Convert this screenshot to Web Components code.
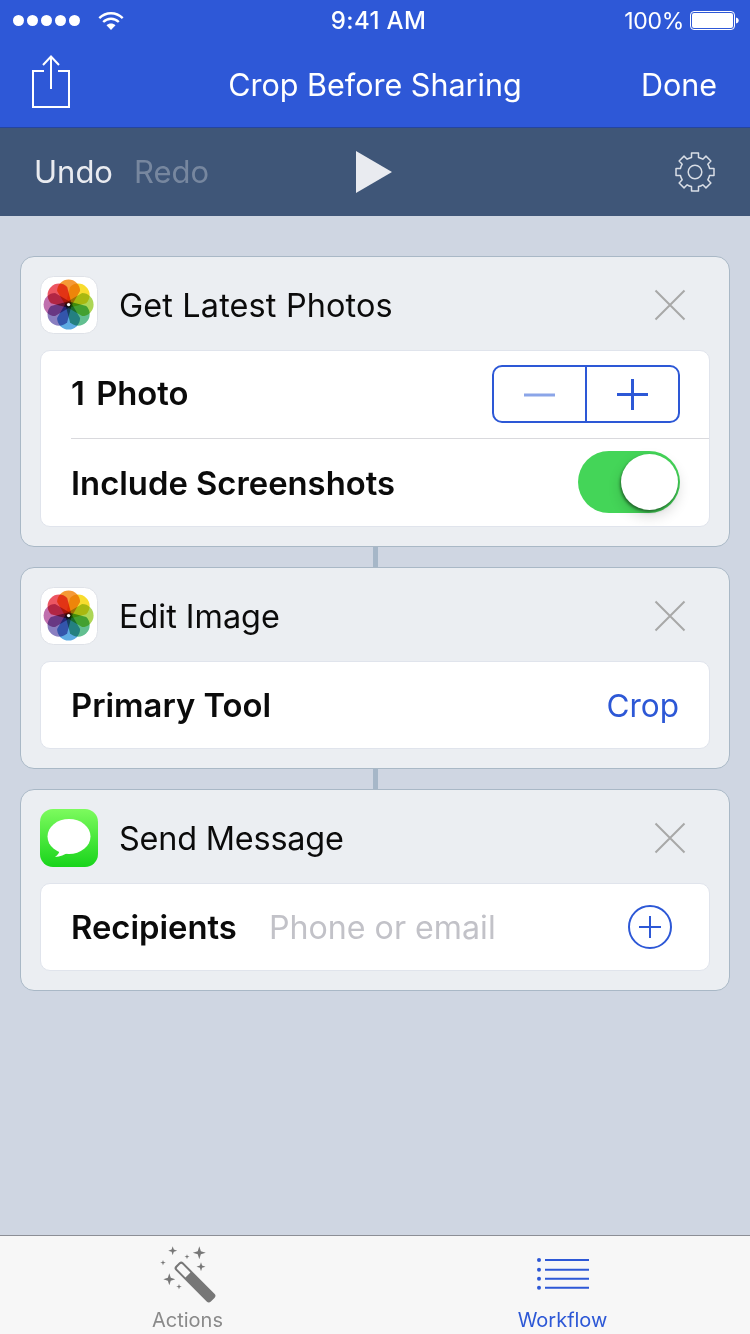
<!DOCTYPE html>
<html lang="en"><head><meta charset="utf-8"><title>Crop Before Sharing</title>
<style>
html,body{margin:0;padding:0;background:#cfd6e2}
body{width:750px;height:1334px;overflow:hidden;font-family:Inter,"Liberation Sans",sans-serif;-webkit-font-smoothing:antialiased}
</style></head><body>
<wf-app>
  <wf-status></wf-status>
  <wf-nav title-text="Crop Before Sharing" action="Done"></wf-nav>
  <wf-toolbar></wf-toolbar>
  <wf-canvas>
    <wf-card heading="Get Latest Photos" icon="photos" track=".15">
      <wf-row label="1 Photo" divider h="88"><wf-stepper></wf-stepper></wf-row>
      <wf-row label="Include Screenshots" h="87"><wf-switch></wf-switch></wf-row>
    </wf-card>
    <wf-link></wf-link>
    <wf-card heading="Edit Image" icon="photos">
      <wf-row label="Primary Tool" h="86"><wf-value>Crop</wf-value></wf-row>
    </wf-card>
    <wf-link></wf-link>
    <wf-card heading="Send Message" icon="messages" track="-.2">
      <wf-row label="Recipients" h="86"><wf-recipient></wf-recipient></wf-row>
    </wf-card>
  </wf-canvas>
  <wf-tabbar></wf-tabbar>
</wf-app>
<script>
function def(name,html){
  customElements.define(name,class extends HTMLElement{
    constructor(){super();this.attachShadow({mode:'open'});}
    connectedCallback(){this.shadowRoot.innerHTML=typeof html==='function'?html(this):html;}
  });
}
def('wf-app',`<style>:host{display:flex;flex-direction:column;width:750px;height:1334px}</style><slot></slot>`);

def('wf-status',`<style>
:host{display:grid;grid-template-columns:1fr auto 1fr;align-items:center;height:40px;background:#2e58d7;color:#fff;font-size:23px;flex:none}
.l{display:flex;align-items:center;padding-left:13px;gap:3px}
.d{width:11px;height:11px;border-radius:50%;background:#fff}
svg{display:block}
.w{margin-left:15px}
.t{font-weight:500;font-size:24px;letter-spacing:.4px;margin:1px 0 0 7px}
.r{display:flex;align-items:center;justify-content:flex-end;padding-right:11px;gap:6px}
.p{letter-spacing:-.3px;margin-top:1px}
</style>
<div class="l"><i class="d"></i><i class="d"></i><i class="d"></i><i class="d"></i><i class="d"></i>
<svg class="w" width="26" height="19" viewBox="0 0 26 19"><g fill="none" stroke="#fff" stroke-width="2.4"><path d="M1.300 7.200C8 .6 18 .6 24.700 7.200"/><path d="M5.200 11C9.800 6.600 16.200 6.600 20.800 11"/></g><path d="M13 19L8.500 14.300C11 12 15 12 17.500 14.300Z" fill="#fff"/></svg></div>
<div class="t">9:41 AM</div>
<div class="r"><span class="p">100%</span>
<svg width="49" height="19" viewBox="0 0 49 19"><rect x=".5" y=".5" width="44" height="18" rx="3.500" fill="none" stroke="#fff"/><rect x="2" y="2" width="41" height="15" rx="2" fill="#fff"/><path d="M46 6.500c1.700.3 2.700 1.500 2.700 3s-1 2.700-2.700 3z" fill="#fff"/></svg></div>`);

def('wf-nav',h=>`<style>
:host{display:grid;grid-template-columns:1fr auto 1fr;align-items:center;height:87px;background:#2e58d7;border-bottom:1px solid #24459f;color:#fff;font-size:30.500px;flex:none}
.l{padding-left:32px;display:flex}svg{display:block;margin-top:-4px}
.a{text-align:right;padding-right:33px}
.c,.a{margin-top:2px}
</style>
<div class="l"><svg width="38" height="53" viewBox="0 0 38 53"><g fill="none" stroke="#fff" stroke-width="2"><path d="M12 16H1V52H37V16H26"/><path d="M19 34V1.500"/><path d="M11 10L19 1.500L27 10"/></g></svg></div>
<div class="c">${h.getAttribute('title-text')}</div><div class="a">${h.getAttribute('action')}</div>`);

function gear(cx,cy,ro,ri,n){
  let d='';const st=Math.PI*2/n;
  for(let i=0;i<n;i++){
    const a=i*st-Math.PI/2;
    const pts=[[ri,a-st*.30],[ro,a-st*.23],[ro,a+st*.23],[ri,a+st*.30]];
    pts.forEach((p,j)=>{d+=(i===0&&j===0?'M':'L')+(cx+p[0]*Math.cos(p[1])).toFixed(2)+' '+(cy+p[0]*Math.sin(p[1])).toFixed(2)+' ';});
    const e=a+st*.70;
    d+='A'+ri+' '+ri+' 0 0 1 '+(cx+ri*Math.cos(e)).toFixed(2)+' '+(cy+ri*Math.sin(e)).toFixed(2)+' ';
  }
  return d+'Z';
}
def('wf-toolbar',`<style>
:host{display:grid;grid-template-columns:1fr auto 1fr;align-items:center;height:88px;background:#3f5678;font-size:31px;flex:none}
.l{padding-left:34px;display:flex;gap:21px;margin-top:-2px}
.u{color:#e9ebf0}.re{color:#77879f}
svg{display:block}
.r{display:flex;justify-content:flex-end;padding-right:34px}
</style>
<div class="l"><span class="u">Undo</span><span class="re">Redo</span></div>
<svg width="36" height="42" viewBox="0 0 36 42" style="margin-right:2px"><path d="M0 0L36 21L0 42Z" fill="#e9ebf0"/></svg>
<div class="r"><svg width="42" height="42" viewBox="0 0 42 42"><path d="${gear(21,21,19.300,15,8)}" fill="none" stroke="#d9dee6" stroke-width="1.500" stroke-linejoin="round"/><circle cx="21" cy="21" r="6.800" fill="none" stroke="#d9dee6" stroke-width="1.500"/></svg></div>`);

def('wf-canvas',`<style>:host{display:flex;flex-direction:column;flex:1;padding:40px 20px 0;min-height:0}</style><slot></slot>`);
def('wf-link',`<style>:host{display:block;width:5px;height:20px;background:#a6b7c8;align-self:center}</style>`);

const petals=[['#f59a35',0],['#f8dc2e',45],['#add655',90],['#62bf90',135],['#5eabe3',180],['#8a7fc0',225],['#c06fae',270],['#ec5663',315]];
const photos=`<svg width="58" height="58" viewBox="0 0 58 58"><rect x=".5" y=".5" width="57" height="57" rx="13" fill="#fff" stroke="#dfe2e8"/><g style="isolation:isolate">${petals.map(p=>`<path d="M-3 1L-11.500 -13.500A11.500 11.500 0 1 1 11.500 -13.500L3 1Z" fill="${p[0]}" style="mix-blend-mode:multiply" transform="translate(28.600 28.600) rotate(${p[1]})"/>`).join('')}</g><circle cx="28.600" cy="28.600" r="1.700" fill="#fff"/></svg>`;
const messages=`<svg width="58" height="58" viewBox="0 0 58 58"><defs><linearGradient id="g" x1="0" y1="0" x2="0" y2="1"><stop offset="0" stop-color="#7dfb5e"/><stop offset="1" stop-color="#18d41b"/></linearGradient></defs><rect width="58" height="58" rx="13" fill="url(#g)"/><ellipse cx="29" cy="27.500" rx="21.500" ry="17.500" fill="#fff"/><path d="M20 39C20 43 18 46 15 48C20 47.500 25 46 28 43Z" fill="#fff"/></svg>`;
def('wf-card',h=>`<style>
:host{display:block;box-sizing:border-box;background:#ebeef2;border:1px solid #a9b8c6;border-radius:14px;padding:0 19px 19px;flex:none}
.h{display:flex;align-items:center;box-sizing:border-box;height:93px;padding-top:3px;font-size:32.400px;color:#0b0b0b;gap:21px}
svg{display:block;flex:none}
.t{flex:1;letter-spacing:${h.getAttribute('track')||0}px}
.x{margin-right:24px}
.b{background:#fff;border:1px solid #e0e4ec;border-radius:10px;overflow:hidden}
</style>
<div class="h">${h.getAttribute('icon')==='photos'?photos:messages}<span class="t">${h.getAttribute('heading')}</span>
<svg class="x" width="32" height="32" viewBox="0 0 32 32"><path d="M1.500 1.500L30.500 30.500M30.500 1.500L1.500 30.500" stroke="#a8a8a8" stroke-width="2"/></svg></div>
<div class="b"><slot></slot></div>`);

def('wf-row',h=>`<style>
:host{display:flex;align-items:center;box-sizing:border-box;height:${h.getAttribute('h')}px;margin-left:30px;padding-right:29px;gap:32px;${h.hasAttribute('divider')?'border-bottom:1px solid #d9d9dd;':''}}
.l{font-size:32.800px;font-weight:600;color:#0b0b0b;white-space:nowrap;${h.hasAttribute('divider')?'margin-top:-3px;word-spacing:3px;':''}}
::slotted(*){margin-left:auto}
</style><span class="l">${h.getAttribute('label')}</span><slot></slot>`);

def('wf-stepper',`<style>
:host{display:flex;box-sizing:border-box;width:188px;height:58px;border:2px solid #2d58d6;border-radius:10px;margin-top:-1px}
div{flex:1;display:flex;align-items:center;justify-content:center}
.a{border-right:2px solid #2d58d6}
svg{display:block}
</style><div class="a"><svg width="31" height="31" viewBox="0 0 31 31"><path d="M0 16H31" stroke="#8ba5e8" stroke-width="3"/></svg></div><div><svg width="31" height="31" viewBox="0 0 31 31"><path d="M0 15.500H31M15.500 0V31" stroke="#2d58d6" stroke-width="3"/></svg></div>`);

def('wf-switch',`<style>
:host{display:block;position:relative;width:102px;height:62px;border-radius:31px;background:#44d558;margin-top:-1px}
.k{position:absolute;right:2px;top:3px;width:57px;height:56px;border-radius:50%;background:#fff;box-shadow:-1px 2px 3px rgba(0,0,0,.45),0 6px 14px rgba(0,0,0,.16)}
</style><div class="k"></div>`);

def('wf-value',`<style>:host{display:block;font-size:31.500px;color:#2d58d6;padding-right:1px}</style><slot></slot>`);

def('wf-recipient',`<style>
:host{display:flex;align-items:center;flex:1;font-size:32.200px;color:#c2c2c8}
span{flex:1}
svg{display:block;margin-right:8px}
</style><span>Phone or email</span><svg width="44" height="44" viewBox="0 0 44 44"><circle cx="22" cy="22" r="21" fill="none" stroke="#2d58d6" stroke-width="2"/><path d="M11 22H33M22 11V33" stroke="#2d58d6" stroke-width="2"/></svg>`);

const star=(x,y,r)=>{const q=r*.24;return `M${x} ${y-r}L${x+q} ${y-q}L${x+r} ${y}L${x+q} ${y+q}L${x} ${y+r}L${x-q} ${y+q}L${x-r} ${y}L${x-q} ${y-q}Z`;};
def('wf-tabbar',`<style>
:host{display:grid;grid-template-columns:1fr 1fr;height:99px;box-sizing:border-box;background:#f7f7f7;border-top:1px solid #8c8f96;flex:none}
div{display:flex;flex-direction:column;align-items:center;font-size:20px}
svg{display:block;margin-top:9px}
span{margin-top:5px;line-height:24px}
.a{color:#8a8a8a}.w{color:#2d58d6}
</style>
<div class="a"><svg width="60" height="58" viewBox="0 0 60 58"><path fill="#777" d="${star(14.700,5.700,4.500)} ${star(41.300,7.700,6.500)} ${star(29,11.700,2.500)} ${star(5,17.700,2.800)} ${star(43,21.700,4.500)} ${star(11.300,34.300,6)} ${star(21,41.700,2.800)}"/><g transform="translate(37 37) rotate(-45)"><rect x="-5.500" y="-25" width="11" height="50" rx="3" fill="#777"/><path d="M-3.500 -10V-21.500a1.500 1.500 0 0 1 1.500 -1.500H2A1.500 1.500 0 0 1 3.500 -21.500V-10Z" fill="#f7f7f7"/></g></svg><span>Actions</span></div>
<div class="w"><svg width="54" height="58" viewBox="0 0 54 58"><g fill="#2d58d6"><circle cx="3" cy="15" r="2"/><circle cx="3" cy="24.700" r="2"/><circle cx="3" cy="33.700" r="2"/><circle cx="3" cy="42.700" r="2"/></g><path d="M9 15H53M9 24.700H53M9 33.700H53M9 42.700H53" stroke="#2d58d6" stroke-width="2"/></svg><span>Workflow</span></div>`);
</script>
</body></html>
